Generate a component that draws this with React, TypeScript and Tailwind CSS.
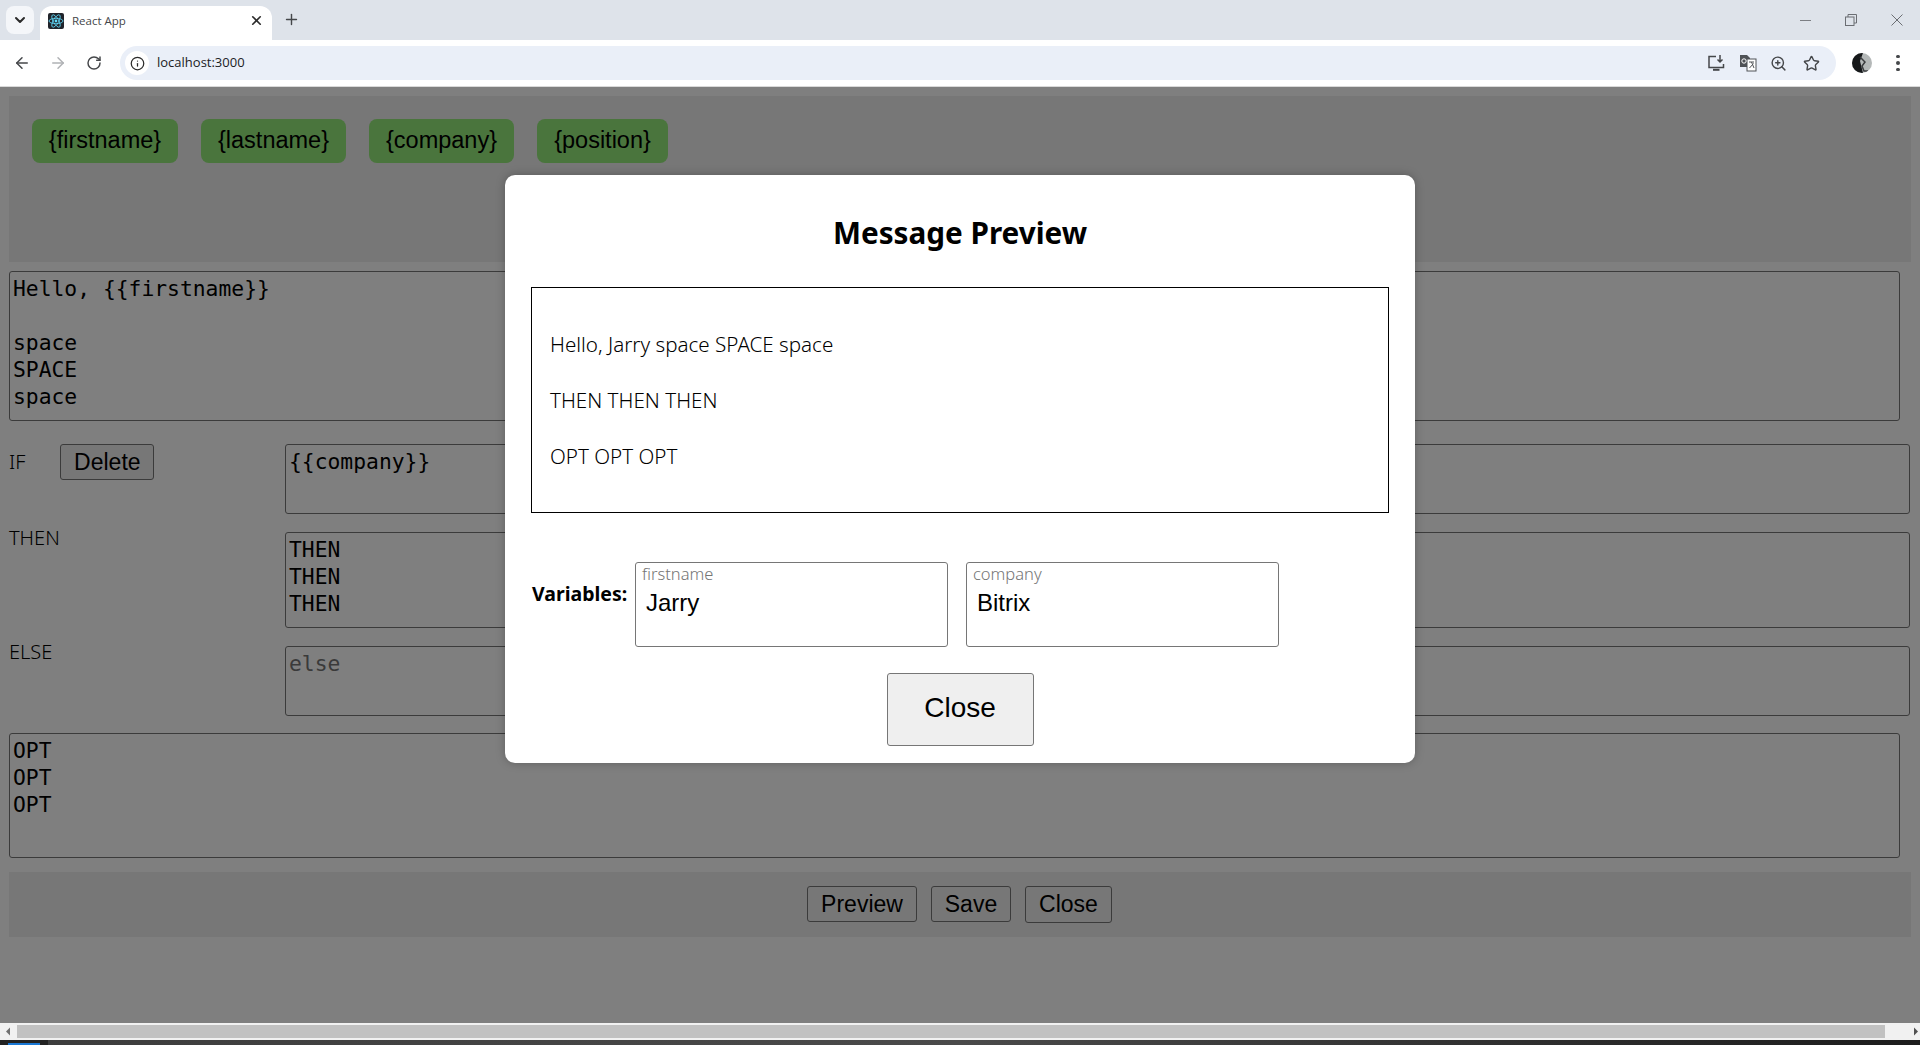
import React from "react"
import { ArrowLeft, ArrowRight, ChevronDown, Info, Plus, RotateCw, Star, X, ZoomIn } from "lucide-react"

const TextBox = ({ value, placeholder, className }: { value?: string; placeholder?: string; className: string }) => (
	<textarea
		readOnly
		defaultValue={value}
		placeholder={placeholder}
		className={`block resize-none rounded-[3px] border border-[#767676] bg-white px-[3px] pt-[3px] font-['DejaVu_Sans_Mono',monospace] text-[21.33px] leading-[27px] text-black outline-none placeholder:text-[#757575] ${className}`}
	/>
)

const PageButton = ({ label, className }: { label: string; className: string }) => (
	<button className={`rounded-[3px] border border-[#767676] bg-[#efefef] font-['Liberation_Sans',sans-serif] text-[23px] leading-none text-black ${className}`}>
		{label}
	</button>
)

const Chip = ({ label, className }: { label: string; className: string }) => (
	<button className={`flex h-[44px] items-center justify-center rounded-[8px] bg-[#94ea7a] pb-[1px] font-['Liberation_Sans',sans-serif] text-[23.5px] text-black ${className}`}>
		{label}
	</button>
)

const VariableBox = ({ label, value, className }: { label: string; value: string; className: string }) => (
	<div className={`h-[85px] rounded-[3px] border border-[#767676] px-[6px] ${className}`}>
		<div className="text-[16.5px] font-light leading-[22px] text-[#757575]">{label}</div>
		<div className="pl-[4px] pt-[2px] font-['Liberation_Sans',sans-serif] text-[24px] leading-[32px] text-black">{value}</div>
	</div>
)

const BrowserChrome = () => (
	<div className="shrink-0">
		<div className="flex h-[40px] bg-[#dee3ea]">
			<div className="ml-[6px] mt-[6px] flex h-[28px] w-[28px] items-center justify-center rounded-[8px] bg-[#f4f6f9]">
				<ChevronDown size={16} strokeWidth={3} className="text-[#2b2b2b]" />
			</div>
			<div className="ml-[6px] mt-[6px] flex h-[34px] w-[232px] items-center rounded-t-[12px] bg-white pb-[5px] pl-[8px] pr-[8px]">
				<svg width="16" height="16" viewBox="0 0 16 16">
					<rect width="16" height="16" rx="2" fill="#20232a" />
					<g fill="none" stroke="#61dafb" strokeWidth="0.8">
						<ellipse cx="8" cy="8" rx="7" ry="2.7" />
						<ellipse cx="8" cy="8" rx="7" ry="2.7" transform="rotate(60 8 8)" />
						<ellipse cx="8" cy="8" rx="7" ry="2.7" transform="rotate(120 8 8)" />
					</g>
					<circle cx="8" cy="8" r="1.4" fill="#61dafb" />
				</svg>
				<span className="ml-[8px] flex-1 font-['Open_Sans',sans-serif] text-[11.5px] text-[#45474a]">React App</span>
				<X size={15} strokeWidth={2.6} className="text-[#2b2b2b]" />
			</div>
			<div className="ml-[11px] mt-[11px]">
				<Plus size={17} strokeWidth={2} className="text-[#45474a]" />
			</div>
			<div className="flex-1" />
			<div className="flex h-[40px] items-center pr-[17px] text-[#5f6368]">
				<div className="h-px w-[11px] bg-[#7c7f84]" />
				<svg width="12" height="12" viewBox="0 0 12 12" className="ml-[34px]" fill="none" stroke="#6b6e73">
					<rect x="0.5" y="3" width="8.5" height="8.5" />
					<path d="M3 3V0.5H11.5V9H9" />
				</svg>
				<svg width="12" height="12" viewBox="0 0 12 12" className="ml-[34px]" fill="none" stroke="#6b6e73">
					<path d="M0.5 0.5L11.5 11.5M11.5 0.5L0.5 11.5" />
				</svg>
			</div>
		</div>
		<div className="flex h-[47px] items-center rounded-t-[10px] border-b border-[#d9d9d9] bg-white">
			<ArrowLeft size={18} strokeWidth={2} className="ml-[13px] text-[#45474a]" />
			<ArrowRight size={18} strokeWidth={2} className="ml-[18px] text-[#b0b2b5]" />
			<RotateCw size={16} strokeWidth={2.2} className="ml-[19px] text-[#45474a]" />
			<div className="ml-[18px] flex h-[34px] w-[1716px] items-center rounded-full bg-[#eaeff8]">
				<div className="ml-[5px] flex h-[24px] w-[24px] items-center justify-center rounded-full bg-white">
					<Info size={15} strokeWidth={2} className="text-[#2b2b2b]" />
				</div>
				<span className="ml-[8px] flex-1 font-['Open_Sans',sans-serif] text-[13px] text-[#202124]">localhost:3000</span>
				<svg width="18" height="18" viewBox="0 0 18 18" fill="none" stroke="#45474a" strokeWidth="1.5">
					<path d="M9 2.5H2V13.5H16.5V10" />
					<path d="M13 1V7.5M10.5 5.5L13 8L15.5 5.5" />
					<path d="M6 15.8H12.5" strokeWidth="2" />
				</svg>
				<svg width="18" height="18" viewBox="0 0 18 18" className="ml-[14px]">
					<path d="M1 1H8L11 4V13H1Z" fill="#4f5256" />
					<rect x="8" y="5" width="9" height="12" fill="#fff" stroke="#4f5256" />
					<path d="M10 8H15M12.5 8L15 14M14.5 9.5L10.5 14" stroke="#4f5256" fill="none" />
					<circle cx="5" cy="7" r="2.2" fill="none" stroke="#fff" />
				</svg>
				<ZoomIn size={17} strokeWidth={2} className="ml-[13px] text-[#45474a]" />
				<Star size={17} strokeWidth={2} className="ml-[16px] mr-[16px] text-[#45474a]" />
			</div>
			<svg width="20" height="20" viewBox="0 0 20 20" className="ml-[16px]">
				<defs>
					<clipPath id="avatar-clip">
						<circle cx="10" cy="10" r="10" />
					</clipPath>
				</defs>
				<g clipPath="url(#avatar-clip)">
					<rect width="20" height="20" fill="#b4b8b8" />
					<path d="M0 0H11L8 8L11 20H0Z" fill="#16181a" />
					<path d="M8 4L13 9L10 13L12 18H16" fill="none" stroke="#3a3c3e" strokeWidth="1.5" />
				</g>
			</svg>
			<div className="ml-[24px] flex flex-col gap-[3px]">
				<div className="h-[3.5px] w-[3.5px] rounded-full bg-[#45474a]" />
				<div className="h-[3.5px] w-[3.5px] rounded-full bg-[#45474a]" />
				<div className="h-[3.5px] w-[3.5px] rounded-full bg-[#45474a]" />
			</div>
		</div>
	</div>
)

const Editor = () => (
	<div className="h-full bg-white pl-[9px] pt-[9px] font-['Noto_Sans',sans-serif] text-[20px] font-light text-black">
		<div className="flex h-[166px] w-[1902px] items-start gap-[23px] bg-[#eeeeee] pl-[23px] pt-[23px]">
			<Chip label="{firstname}" className="w-[146px]" />
			<Chip label="{lastname}" className="w-[145px]" />
			<Chip label="{company}" className="w-[145px]" />
			<Chip label="{position}" className="w-[131px]" />
		</div>
		<TextBox value={"Hello, {{firstname}}\n\nspace\nSPACE\nspace"} className="mt-[9px] h-[150px] w-[1891px]" />
		<div className="mt-[23px] grid grid-cols-[276px_1625px] gap-y-[18px]">
			<div className="flex items-start">
				<span className="mt-[5px] leading-[26px]">IF</span>
				<PageButton label="Delete" className="ml-[35px] h-[36px] w-[94px]" />
			</div>
			<TextBox value="{{company}}" className="h-[70px] w-[1625px]" />
			<div className="-mt-[7px] leading-[26px]">THEN</div>
			<TextBox value={"THEN\nTHEN\nTHEN"} className="h-[96px] w-[1625px]" />
			<div className="-mt-[7px] leading-[26px]">ELSE</div>
			<TextBox placeholder="else" className="h-[70px] w-[1625px]" />
		</div>
		<TextBox value={"OPT\nOPT\nOPT"} className="mt-[17px] h-[125px] w-[1891px]" />
		<div className="mt-[14px] flex h-[65px] w-[1902px] items-start justify-center gap-[14px] bg-[#eeeeee] pr-[1px] pt-[14px]">
			<PageButton label="Preview" className="h-[36px] w-[110px]" />
			<PageButton label="Save" className="h-[36px] w-[80px]" />
			<PageButton label="Close" className="h-[37px] w-[87px]" />
		</div>
	</div>
)

const PreviewModal = () => (
	<div className="absolute inset-0 bg-black/50">
		<div className="ml-[505px] mt-[88px] h-[588px] w-[910px] rounded-[10px] bg-white px-[26px] pt-[38px] font-['Noto_Sans',sans-serif] text-black shadow-[0_0_10px_rgba(0,0,0,0.25)]">
			<h2 className="text-center text-[29.7px] font-bold leading-[40px]">Message Preview</h2>
			<div className="mt-[34px] h-[226px] w-[858px] border border-black pl-[18px] pt-[43px] text-[20.6px] font-light leading-[26px]">
				<p>Hello, Jarry space SPACE space</p>
				<p className="mt-[30px]">THEN THEN THEN</p>
				<p className="mt-[30px]">OPT OPT OPT</p>
			</div>
			<div className="mt-[49px] flex items-start">
				<span className="mt-[19px] w-[104px] pl-[1px] text-[19.5px] font-bold leading-[26px]">Variables:</span>
				<VariableBox label="firstname" value="Jarry" className="w-[313px]" />
				<VariableBox label="company" value="Bitrix" className="ml-[18px] w-[313px]" />
			</div>
			<div className="mt-[26px] flex justify-center">
				<button className="h-[73px] w-[147px] rounded-[3px] border border-[#767676] bg-[#efefef] pb-[3px] font-['Liberation_Sans',sans-serif] text-[28px] text-black">
					Close
				</button>
			</div>
		</div>
	</div>
)

const BottomBars = () => (
	<div className="shrink-0">
		<div className="flex h-[17px] items-center bg-[#f1f1f1]">
			<svg width="17" height="17" viewBox="0 0 17 17">
				<path d="M6 8.5L10 4.5V12.5Z" fill="#707070" />
			</svg>
			<div className="h-[13px] w-[1868px] bg-[#c1c1c1]" />
			<svg width="35" height="17" viewBox="0 0 35 17">
				<path d="M29 4.5L33 8.5L29 12.5Z" fill="#505050" />
			</svg>
		</div>
		<div className="flex h-[5px] bg-gradient-to-r from-[#3c3c3c] via-[#4a4a4a] to-[#1c1c1c]">
			<div className="h-[5px] w-[48px] bg-[#222222] pl-[8px] pt-[3px]">
				<div className="h-[2px] w-[32px] bg-[#1a78d4]" />
			</div>
		</div>
	</div>
)

export default function App() {
	return (
		<div className="flex h-[1045px] w-[1920px] flex-col overflow-hidden bg-white">
			<BrowserChrome />
			<main className="relative flex-1 overflow-hidden">
				<Editor />
				<PreviewModal />
			</main>
			<BottomBars />
		</div>
	)
}
